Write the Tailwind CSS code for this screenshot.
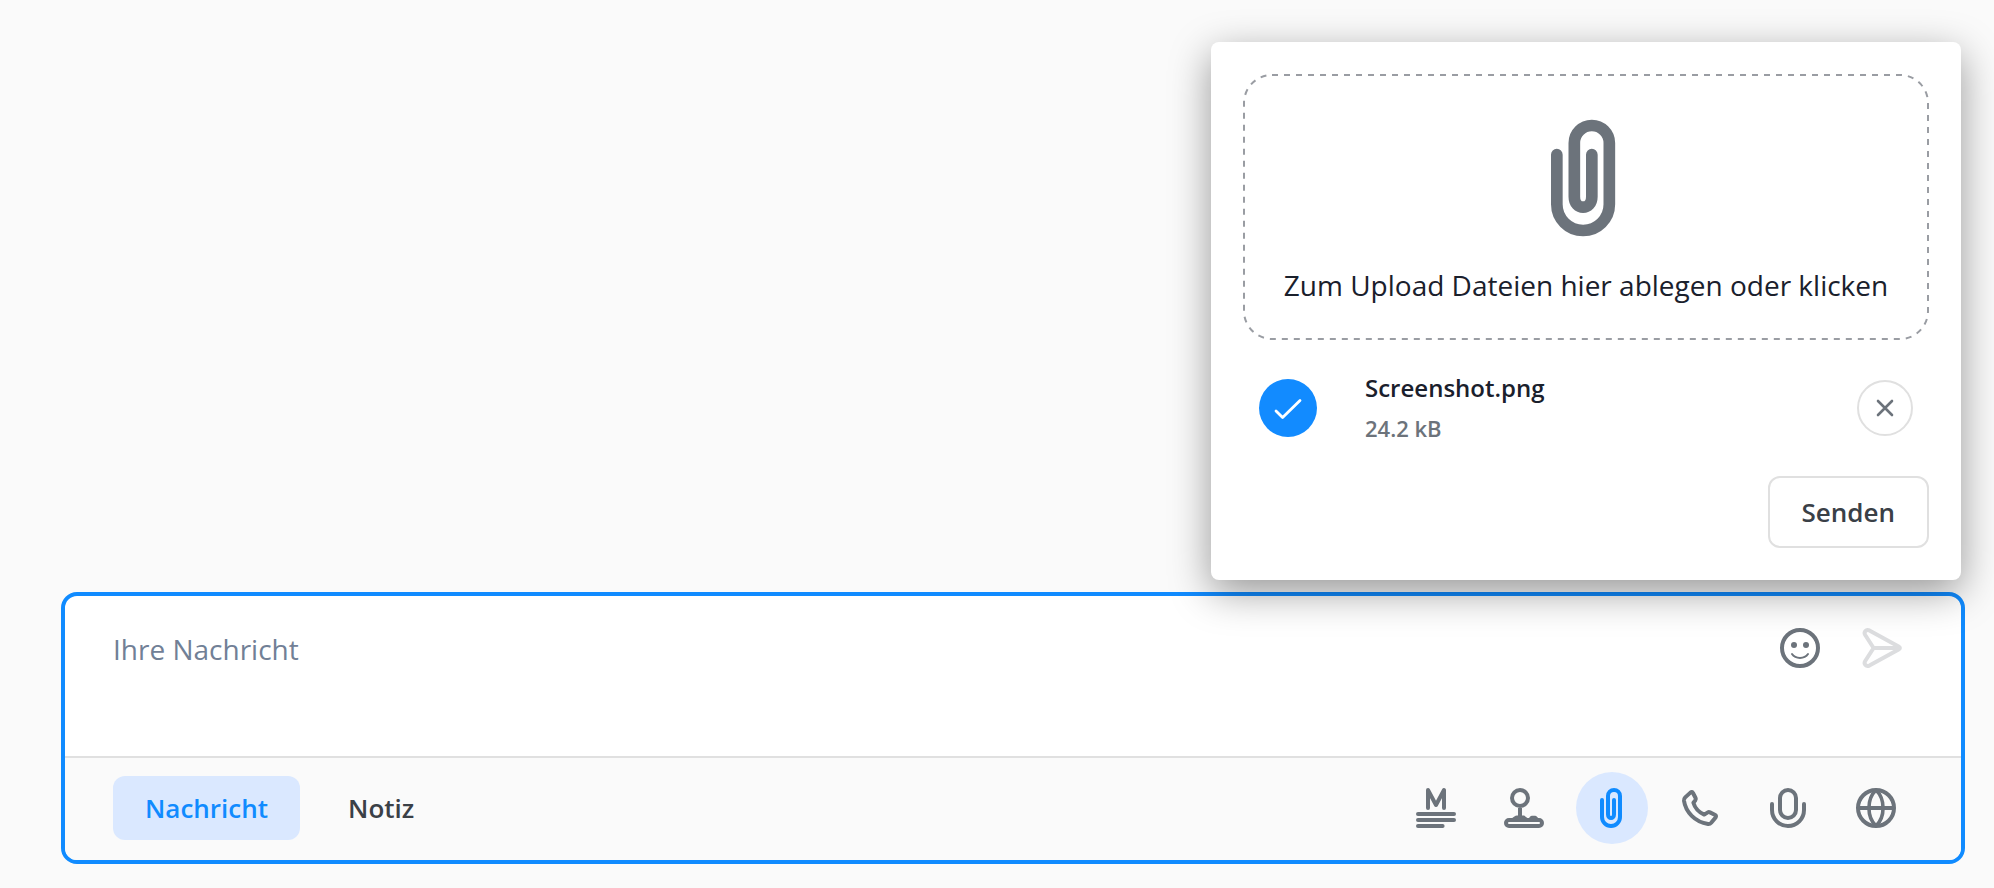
<!DOCTYPE html>
<html lang="de">
<head>
    <meta charset="UTF-8">
    <meta name="viewport" content="width=device-width, initial-scale=1.0">
    <title>Nachricht verfassen</title>
    <script src="https://cdn.jsdelivr.net/npm/@tailwindcss/browser@4"></script>
</head>
<body class="flex flex-col min-h-screen bg-[#fafafa] pt-[42px] pb-5 pl-[61px] pr-[29px] font-['Open_Sans',sans-serif]">
    <!-- Upload-Fenster -->
    <section aria-label="Dateien hochladen" class="relative z-10 w-[750px] max-w-full self-end mr-1 mb-3 p-8 bg-white rounded-lg shadow-[0_12px_40px_rgba(0,0,0,0.4)]">
        <label class="relative flex flex-col items-center gap-4 p-[34px] cursor-pointer">
            <input type="file" class="sr-only">
            <!-- Gestrichelter Rahmen -->
            <svg class="absolute inset-px size-[calc(100%-2px)] overflow-visible text-[#9a9da3]" fill="none" stroke="currentColor" stroke-width="2" stroke-dasharray="6 6" aria-hidden="true">
                <rect width="100%" height="100%" rx="28"/>
            </svg>
            <svg class="size-[140px] text-[#6c737b]" viewBox="0 0 24 24" fill="none" stroke="currentColor" stroke-width="2" stroke-linecap="round">
                <path d="M7 8v8.500a4.500 4.500 0 0 0 9 0V6a3 3 0 0 0-6 0v9.200c0 2.400 3 2.400 3 0V8"/>
            </svg>
            <span class="text-[28px] leading-[42px] text-[#1a202c]">Zum Upload Dateien hier ablegen oder klicken</span>
        </label>

        <div class="flex items-center px-4 my-7">
            <span class="flex items-center justify-center size-[58px] rounded-full bg-[#128bff] text-white">
                <svg class="size-12" viewBox="0 0 24 24" fill="none" stroke="currentColor" stroke-width="1.4" stroke-linecap="round" stroke-linejoin="round">
                    <path d="M6 13.500 9.300 16.800 18 8.200"/>
                </svg>
            </span>
            <div class="flex-1 ml-12 font-semibold">
                <p class="text-[24px] leading-10 text-[#1a202c]">Screenshot.png</p>
                <p class="text-[22px] leading-10 text-[#6c737b]">24.2 kB</p>
            </div>
            <button type="button" aria-label="Datei entfernen" class="flex items-center justify-center size-14 border-2 border-[#e0e0e0] rounded-full text-[#6c737b]">
                <svg class="size-6" viewBox="0 0 24 24" fill="none" stroke="currentColor" stroke-width="2.600" stroke-linecap="round">
                    <path d="M5 5l14 14M19 5L5 19"/>
                </svg>
            </button>
        </div>

        <div class="flex justify-end">
            <button type="button" class="h-[72px] px-8 border-2 border-[#e0e0e0] rounded-xl text-[26px] font-semibold text-[#3a4047]">Senden</button>
        </div>
    </section>

    <!-- Eingabefeld -->
    <form class="border-4 border-[#108bff] rounded-2xl overflow-hidden bg-white">
        <div class="flex items-start h-40 pl-12 pr-[49px] pt-5">
            <textarea aria-label="Ihre Nachricht" placeholder="Ihre Nachricht" class="flex-1 h-full pt-3 resize-none outline-none text-[28px] leading-[42px] text-[#1a202c] placeholder:text-[#718096]"></textarea>
            <div class="flex gap-4 text-[#6c737b]">
                <button type="button" aria-label="Emoji" class="p-2">
                    <svg class="size-12" viewBox="0 0 24 24" fill="none" stroke="currentColor" stroke-width="2" stroke-linecap="round">
                        <circle cx="12" cy="12" r="9"/>
                        <circle cx="9" cy="10.500" r="1.500" fill="currentColor" stroke="none"/>
                        <circle cx="15" cy="10.500" r="1.500" fill="currentColor" stroke="none"/>
                        <path stroke-width="1" d="M8 15c1.800 2.600 6.200 2.600 8 0"/>
                    </svg>
                </button>
                <button type="submit" aria-label="Absenden" class="p-2 text-[#dcdddf]">
                    <svg class="size-12" viewBox="0 0 24 24" fill="none" stroke="currentColor" stroke-width="2" stroke-linecap="round" stroke-linejoin="round">
                        <path d="M8.800 12 4.600 5.500C3.700 4 5 2.500 6.700 3.200L21.300 11.200Q22.600 12 21.300 12.800L6.700 20.800C5 21.500 3.700 20 4.600 18.500ZM8.800 12H21.500"/>
                    </svg>
                </button>
            </div>
        </div>

        <div class="flex items-center justify-between pl-12 pr-[49px] pt-[14px] pb-4 border-t-2 border-[#e0e0e0] bg-[#fafafa]">
            <div class="flex gap-4 text-[26px] font-semibold">
                <button type="button" class="h-16 px-8 rounded-xl bg-[#dae8ff] text-[#108bff]">Nachricht</button>
                <button type="button" class="h-16 px-8 rounded-xl text-[#3a4047]">Notiz</button>
            </div>
            <div class="flex gap-4 text-[#6c737b]">
                <button type="button" aria-label="Textvorlage" class="p-3 rounded-full">
                    <svg class="size-12" viewBox="0 0 24 24" fill="none" stroke="currentColor" stroke-width="2" stroke-linecap="round" stroke-linejoin="round">
                        <path d="M8 12V3l4 7.500L16 3v9M3 15h18M3 18h18M3 21h12.300"/>
                    </svg>
                </button>
                <button type="button" aria-label="Joystick" class="p-3 rounded-full">
                    <svg class="size-12" viewBox="0 0 24 24" fill="none" stroke="currentColor" stroke-width="2">
                        <circle cx="10" cy="7" r="4"/>
                        <path d="M10 12v5"/>
                        <rect x="3" y="18" width="18" height="3" rx="1.500"/>
                        <path fill="currentColor" stroke="none" d="M5.500 17.500C7 16.500 7.500 15.800 8.500 15.800h3c1 0 1.500.700 2.700 1.700ZM14.200 17.500C15 16.500 15.200 15.900 16 15.900h1.500c.8 0 1.200.700 2 1.600Z"/>
                    </svg>
                </button>
                <button type="button" aria-label="Datei anhängen" class="p-3 rounded-full bg-[#dae8ff] text-[#108bff]">
                    <svg class="size-12" viewBox="0 0 24 24" fill="none" stroke="currentColor" stroke-width="2" stroke-linecap="round">
                        <path d="M7 8v8.500a4.500 4.500 0 0 0 9 0V6a3 3 0 0 0-6 0v9.200c0 2.400 3 2.400 3 0V8"/>
                    </svg>
                </button>
                <button type="button" aria-label="Anrufen" class="p-3 rounded-full">
                    <svg class="size-12" viewBox="0 0 24 24" fill="none" stroke="currentColor" stroke-width="2" stroke-linejoin="round">
                        <path d="M7.200 4.300Q8 3.700 8.500 4.500L9.800 7Q10.100 7.600 9.700 8.100L8.700 9.400Q9.900 13.500 14.100 15.300L15.900 14.200Q16.400 13.900 17 14.200L19.600 15.500Q20.300 15.900 19.800 16.700L17.600 19.400Q17 20.100 16 20C9.500 19 4.800 14 4 8.400Q3.900 7.400 4.600 6.700Z"/>
                    </svg>
                </button>
                <button type="button" aria-label="Sprachnachricht" class="p-3 rounded-full">
                    <svg class="size-12" viewBox="0 0 24 24" fill="none" stroke="currentColor" stroke-width="2" stroke-linecap="round">
                        <rect x="8" y="3" width="8" height="14" rx="4"/>
                        <path d="M4 10v3a8 8 0 0 0 16 0v-3"/>
                    </svg>
                </button>
                <button type="button" aria-label="Sprache" class="p-3 rounded-full">
                    <svg class="size-12" viewBox="0 0 24 24" fill="none" stroke="currentColor" stroke-width="2">
                        <circle cx="12" cy="12" r="9"/>
                        <path d="M3 12h18"/>
                        <path stroke-width="1.800" d="M12 3c-4.700 4.500-4.700 13.500 0 18M12 3c4.700 4.500 4.700 13.500 0 18"/>
                    </svg>
                </button>
            </div>
        </div>
    </form>
</body>
</html>
